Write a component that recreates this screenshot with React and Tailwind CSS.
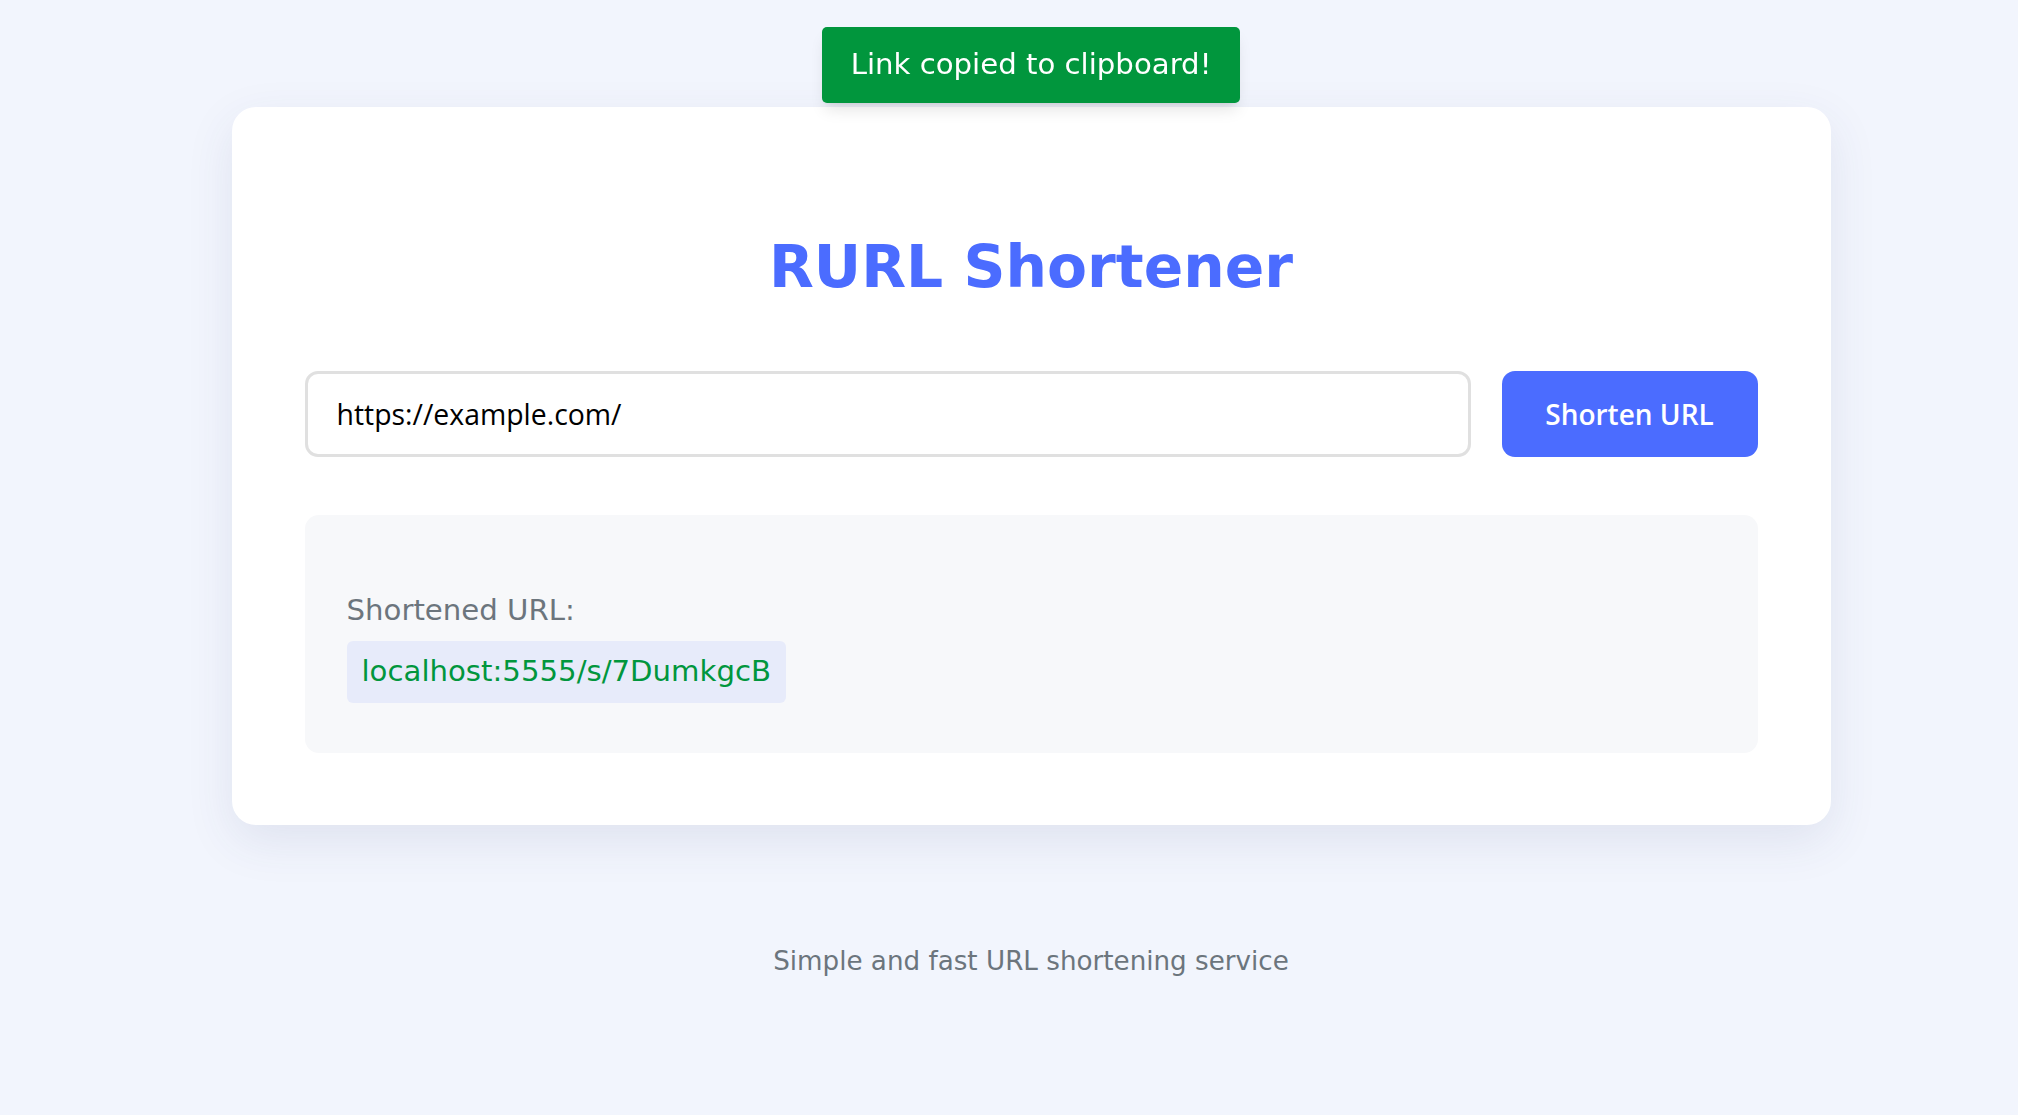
import React from 'react';

const App = () => {
    return (
        <div className="min-h-[1115px] w-full bg-[#f2f5fd] pl-[44px] font-['DejaVu_Sans',sans-serif]">
            {/* Toast */}
            <div className="fixed top-[27px] left-[822px] h-[76px] w-[418px] flex items-center justify-center rounded-[5px] bg-[#01963d] text-white text-[29.2px] shadow-lg z-10">
                Link copied to clipboard!
            </div>

            <div className="flex flex-col items-center pt-[107px]">
                {/* Card */}
                <div className="w-[1599px] rounded-[24px] bg-white px-[73px] pt-[127px] pb-[72px] shadow-[0_16px_48px_rgba(60,70,120,0.10)]">
                    <h1 className="text-center text-[58.3px] leading-[67px] font-bold text-[#4b6cff]">RURL Shortener</h1>

                    <div className="mt-[70px] flex h-[86px] gap-[31px]">
                        <div className="flex flex-1 items-center rounded-[13px] border-[3px] border-[#e0e0e0] px-[29px]">
                            <span className="font-['Open_Sans',sans-serif] text-[28.4px] text-black">https://example.com/</span>
                        </div>
                        <button className="w-[256px] rounded-[13px] bg-[#4b6cff] font-['Open_Sans',sans-serif] text-[28px] font-semibold text-white">
                            Shorten URL
                        </button>
                    </div>

                    {/* Result */}
                    <div className="mt-[58px] rounded-[14px] bg-[#f7f8fa] px-[42px] pt-[78px] pb-[50px]">
                        <div className="text-[29.2px] leading-[34px] text-[#6c757d]">Shortened URL:</div>
                        <div className="mt-[14px] inline-flex h-[62px] items-center rounded-[6px] bg-[#e7ebfa] px-[15px] text-[29.2px] text-[#01963d]">
                            localhost:5555/s/7DumkgcB
                        </div>
                    </div>
                </div>

                <p className="mt-[117px] text-[26.2px] text-[#6c757d]">Simple and fast URL shortening service</p>
            </div>
        </div>
    );
};

export default App;
